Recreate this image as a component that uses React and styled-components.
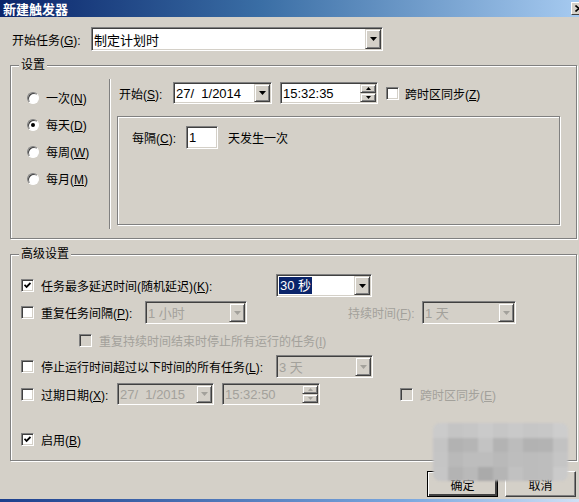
import React from 'react'
import styled, { createGlobalStyle } from 'styled-components'

const FACE = '#d4d0c8'
const GRAY = '#a3a19b'

const GlobalStyle = createGlobalStyle`
  html, body { margin: 0; padding: 0; background: ${FACE}; }
  body {
    font-family: "Liberation Sans", "Noto Sans CJK SC", sans-serif;
    font-size: 12px;
    color: #000;
  }
  * { box-sizing: border-box; }
  u { text-underline-offset: 1px; }
`

const Window = styled.div`
  position: relative;
  width: 579px;
  height: 502px;
  background: ${FACE};
  display: flex;
  flex-direction: column;
  overflow: hidden;
`

const TitleBar = styled.div`
  height: 17px;
  flex-shrink: 0;
  display: flex;
  align-items: center;
  justify-content: space-between;
  padding-left: 3px;
  background: linear-gradient(to right, #0a246a 0%, #3a6ea5 45%, #a6caf0 100%);
  overflow: hidden;
`

const Title = styled.span`
  color: #fff;
  font-weight: bold;
  font-size: 13px;
  font-family: "Noto Sans CJK SC", sans-serif;
  line-height: 17px;
`

const CloseButton = styled.span`
  width: 16px;
  height: 13px;
  margin-right: -8px;
  flex-shrink: 0;
  display: flex;
  align-items: center;
  justify-content: center;
  background: ${FACE};
  border: 1px solid;
  border-color: #fff #404040 #404040 #fff;
`

const Body = styled.div`
  flex: 1;
  display: flex;
  flex-direction: column;
  padding: 0 0 0 10px;
`

const Row = styled.div`
  display: flex;
  align-items: center;
  height: ${p => p.$h || 23}px;
  margin-top: ${p => p.$mt || 0}px;
  padding-left: ${p => p.$pl || 0}px;
`

const Label = styled.span`
  flex-shrink: 0;
  width: ${p => (p.$w ? `${p.$w}px` : 'auto')};
  margin-left: ${p => p.$ml || 0}px;
  color: ${p => (p.$disabled ? GRAY : '#000')};
  white-space: nowrap;
`

const Group = styled.div`
  position: relative;
  width: 567px;
  height: ${p => p.$h}px;
  margin-top: ${p => p.$mt}px;
  border: 1px solid #808080;
  box-shadow: inset 1px 1px 0 #fff, 1px 1px 0 #fff;
  flex-shrink: 0;
`

const Caption = styled.span`
  position: absolute;
  top: -9px;
  left: 8px;
  padding: 0 2px;
  background: ${FACE};
  line-height: 16px;
`

const Settings = styled.div`
  display: flex;
  height: 100%;
`

const RadioColumn = styled.div`
  width: 98px;
  padding: 18px 0 0 16px;
  display: flex;
  flex-direction: column;
`

const RadioRow = styled.label`
  display: flex;
  align-items: center;
  gap: 7px;
  height: 27px;
`

const Radio = styled.span`
  position: relative;
  width: 12px;
  height: 12px;
  border-radius: 50%;
  background: #fff;
  border: 1px solid;
  border-color: #808080 #fff #fff #808080;
  box-shadow: inset 1px 1px 0 #404040, 0 0 0 0.5px #d4d0c8;

  &::after {
    content: '';
    display: ${p => (p.$on ? 'block' : 'none')};
    position: absolute;
    left: 3px;
    top: 3px;
    width: 4px;
    height: 4px;
    border-radius: 50%;
    background: #000;
  }
`

const VSeparator = styled.div`
  width: 2px;
  height: 150px;
  margin-top: 13px;
  border-left: 1px solid #808080;
  border-right: 1px solid #fff;
`

const Schedule = styled.div`
  display: flex;
  flex-direction: column;
  padding-left: 6px;
`

const Recurrence = styled.div`
  width: 443px;
  height: 109px;
  margin-top: 12px;
  border: 1px solid #808080;
  box-shadow: inset 1px 1px 0 #fff, 1px 1px 0 #fff;
  padding: 9px 0 0 14px;
`

const Field = styled.div`
  display: flex;
  align-items: stretch;
  flex-shrink: 0;
  width: ${p => p.$w}px;
  height: ${p => p.$h || 23}px;
  margin-left: ${p => p.$ml || 0}px;
  padding: 1px;
  background: ${p => (p.$disabled ? FACE : '#fff')};
  color: ${p => (p.$disabled ? GRAY : '#000')};
  border: 1px solid;
  border-color: #808080 #fff #fff #808080;
  box-shadow: inset 1px 1px 0 #404040, inset -1px -1px 0 ${FACE};
`

const FieldText = styled.span`
  flex: 1;
  display: flex;
  align-items: center;
  padding-left: 1px;
  font-size: 13px;
  white-space: pre;
  overflow: hidden;
`

const Selected = styled.span`
  background: #0a246a;
  color: #fff;
  padding: 0 1px;
  line-height: 17px;
`

const RaisedButton = styled.span`
  width: 16px;
  display: flex;
  align-items: center;
  justify-content: center;
  background: ${FACE};
  border: 1px solid;
  border-color: ${FACE} #404040 #404040 ${FACE};
  box-shadow: inset 1px 1px 0 #fff, inset -1px -1px 0 #808080;
  flex: ${p => (p.$half ? 1 : 'none')};
`

const SpinStack = styled.span`
  width: 16px;
  display: flex;
  flex-direction: column;
`

const Arrow = ({ up, small, disabled }) => {
  const w = small ? 5 : 7
  const h = small ? 3 : 4
  const pts = up ? `0,${h} ${w},${h} ${w / 2},0` : `0,0 ${w},0 ${w / 2},${h}`
  return (
    <svg width={w} height={h} viewBox={`0 0 ${w} ${h}`}>
      <polygon points={pts} fill={disabled ? GRAY : '#000'} />
    </svg>
  )
}

const Combo = ({ w, h, value, disabled, ml, selected }) => (
  <Field $w={w} $h={h} $ml={ml} $disabled={disabled}>
    <FieldText>{selected ? <Selected>{value}</Selected> : value}</FieldText>
    <RaisedButton>
      <Arrow disabled={disabled} />
    </RaisedButton>
  </Field>
)

const Spin = ({ w, value, disabled, ml }) => (
  <Field $w={w} $h={22} $ml={ml} $disabled={disabled}>
    <FieldText>{value}</FieldText>
    <SpinStack>
      <RaisedButton $half>
        <Arrow up small disabled={disabled} />
      </RaisedButton>
      <RaisedButton $half>
        <Arrow small disabled={disabled} />
      </RaisedButton>
    </SpinStack>
  </Field>
)

const Box = styled.span`
  width: 13px;
  height: 13px;
  flex-shrink: 0;
  display: inline-flex;
  align-items: center;
  justify-content: center;
  margin-left: ${p => p.$ml || 0}px;
  background: ${p => (p.$disabled ? FACE : '#fff')};
  border: 1px solid;
  border-color: #808080 #fff #fff #808080;
  box-shadow: inset 1px 1px 0 #404040, inset -1px -1px 0 ${FACE};
`

const Check = ({ checked, disabled, ml }) => (
  <Box $disabled={disabled} $ml={ml}>
    {checked && (
      <svg width="7" height="7" viewBox="0 0 7 7">
        <polyline points="0.5,2.8 2.6,5 6.5,1" fill="none" stroke="#000" strokeWidth="1.8" />
      </svg>
    )}
  </Box>
)

const Advanced = styled.div`
  display: flex;
  flex-direction: column;
  padding-left: 10px;
`

const Buttons = styled.div`
  display: flex;
  justify-content: flex-end;
  gap: 7px;
  margin-top: 10px;
  padding-right: 3px;
`

const PushButton = styled.button`
  width: 71px;
  height: 26px;
  padding: 0;
  font: inherit;
  background: ${FACE};
  border: 1px solid;
  border-color: ${p => (p.$primary ? '#000' : `#fff #404040 #404040 #fff`)};
  box-shadow: ${p =>
    p.$primary
      ? 'inset 1px 1px 0 #fff, inset -2px -2px 0 #404040'
      : 'inset -1px -1px 0 #808080'};
`

const Taskbar = styled.div`
  height: 3px;
  flex-shrink: 0;
  background: linear-gradient(to right, #1c3f8c, #7aa7de 70%, #cfe0f5);
`

const Mosaic = styled.div`
  position: absolute;
  left: 433px;
  top: 423px;
  display: grid;
  grid-template-columns: repeat(9, 15px);
  grid-auto-rows: 14.5px;
  border-radius: 7px;
  overflow: hidden;
  filter: blur(0.8px);
`

const Cell = styled.span`
  background: ${p => p.$c};
`

const mosaic = [
  ['#cbcbcb', '#c4c4c4', '#c6c6c6', '#cacaca', '#c6c6c6', '#c9c9c9', '#c6c6c6', '#c7c7c7', '#cdcdcd'],
  ['#c4c4c4', '#b2b2b2', '#b5b5b5', '#c3c3c3', '#b3b3b3', '#bcbcbc', '#b2b2b2', '#b3b3b3', '#c2c2c2'],
  ['#c5c5c5', '#b9b9b9', '#bdbdbd', '#bdbdbd', '#b9b9b9', '#bdbdbd', '#bcbcbc', '#bdbdbd', '#c5c5c5'],
  ['#c6c6c6', '#b3b3b3', '#b9b9b9', '#aaaaaa', '#b5b5b5', '#c1c1c1', '#bcbcbc', '#bdbdbd', '#cacaca'],
]

const frequencies = [
  { text: '一次', key: 'N' },
  { text: '每天', key: 'D', on: true },
  { text: '每周', key: 'W' },
  { text: '每月', key: 'M' },
]

export default function App() {
  return (
    <>
      <GlobalStyle />
      <Window>
        <TitleBar>
          <Title>新建触发器</Title>
          <CloseButton>
            <svg width="8" height="7" viewBox="0 0 8 7">
              <path d="M0.5 0.5 L7.5 6.5 M7.5 0.5 L0.5 6.5" stroke="#000" strokeWidth="1.6" />
            </svg>
          </CloseButton>
        </TitleBar>
        <Body>
          <Row $h={24} $mt={10} $pl={2}>
            <Label $w={79}>开始任务(<u>G</u>):</Label>
            <Combo w={292} h={24} value="制定计划时" />
          </Row>

          <Group $mt={14} $h={174}>
            <Caption>设置</Caption>
            <Settings>
              <RadioColumn>
                {frequencies.map(f => (
                  <RadioRow key={f.key}>
                    <Radio $on={f.on} />
                    <span>
                      {f.text}(<u>{f.key}</u>)
                    </span>
                  </RadioRow>
                ))}
              </RadioColumn>
              <VSeparator />
              <Schedule>
                <Row $h={22} $mt={16} $pl={2}>
                  <Label $w={54}>开始(<u>S</u>):</Label>
                  <Combo w={99} h={22} value="27/  1/2014" />
                  <Spin w={98} ml={8} value="15:32:35" />
                  <Check ml={8} />
                  <Label $ml={6}>跨时区同步(<u>Z</u>)</Label>
                </Row>
                <Recurrence>
                  <Row>
                    <Label $w={54}>每隔(<u>C</u>):</Label>
                    <Field $w={32}>
                      <FieldText>1</FieldText>
                    </Field>
                    <Label $ml={10}>天发生一次</Label>
                  </Row>
                </Recurrence>
              </Schedule>
            </Settings>
          </Group>

          <Group $mt={15} $h={207}>
            <Caption>高级设置</Caption>
            <Advanced>
              <Row $mt={19}>
                <Check checked />
                <Label $ml={7} $w={235}>任务最多延迟时间(随机延迟)(<u>K</u>):</Label>
                <Combo w={96} value="30 秒" selected />
              </Row>
              <Row $mt={4}>
                <Check />
                <Label $ml={7} $w={104}>重复任务间隔(<u>P</u>):</Label>
                <Combo w={102} value="1 小时" disabled />
                <Label $ml={101} $w={74} $disabled>持续时间(<u>F</u>):</Label>
                <Combo w={94} value="1 天" disabled />
              </Row>
              <Row $h={22} $mt={5} $pl={58}>
                <Check disabled />
                <Label $ml={7} $disabled>重复持续时间结束时停止所有运行的任务(<u>I</u>)</Label>
              </Row>
              <Row $mt={4}>
                <Check />
                <Label $ml={7} $w={235}>停止运行时间超过以下时间的所有任务(<u>L</u>):</Label>
                <Combo w={97} value="3 天" disabled />
              </Row>
              <Row $h={22} $mt={5}>
                <Check />
                <Label $ml={7} $w={76}>过期日期(<u>X</u>):</Label>
                <Combo w={97} h={22} value="27/  1/2015" disabled />
                <Spin w={98} ml={8} value="15:32:50" disabled />
                <Check disabled ml={80} />
                <Label $ml={7} $disabled>跨时区同步(<u>E</u>)</Label>
              </Row>
              <Row $h={22} $mt={23}>
                <Check checked />
                <Label $ml={7}>启用(<u>B</u>)</Label>
              </Row>
            </Advanced>
          </Group>

          <Buttons>
            <PushButton $primary>确定</PushButton>
            <PushButton>取消</PushButton>
          </Buttons>
        </Body>
        <Taskbar />
        <Mosaic>
          {mosaic.flat().map((c, i) => (
            <Cell key={i} $c={c} />
          ))}
        </Mosaic>
      </Window>
    </>
  )
}
